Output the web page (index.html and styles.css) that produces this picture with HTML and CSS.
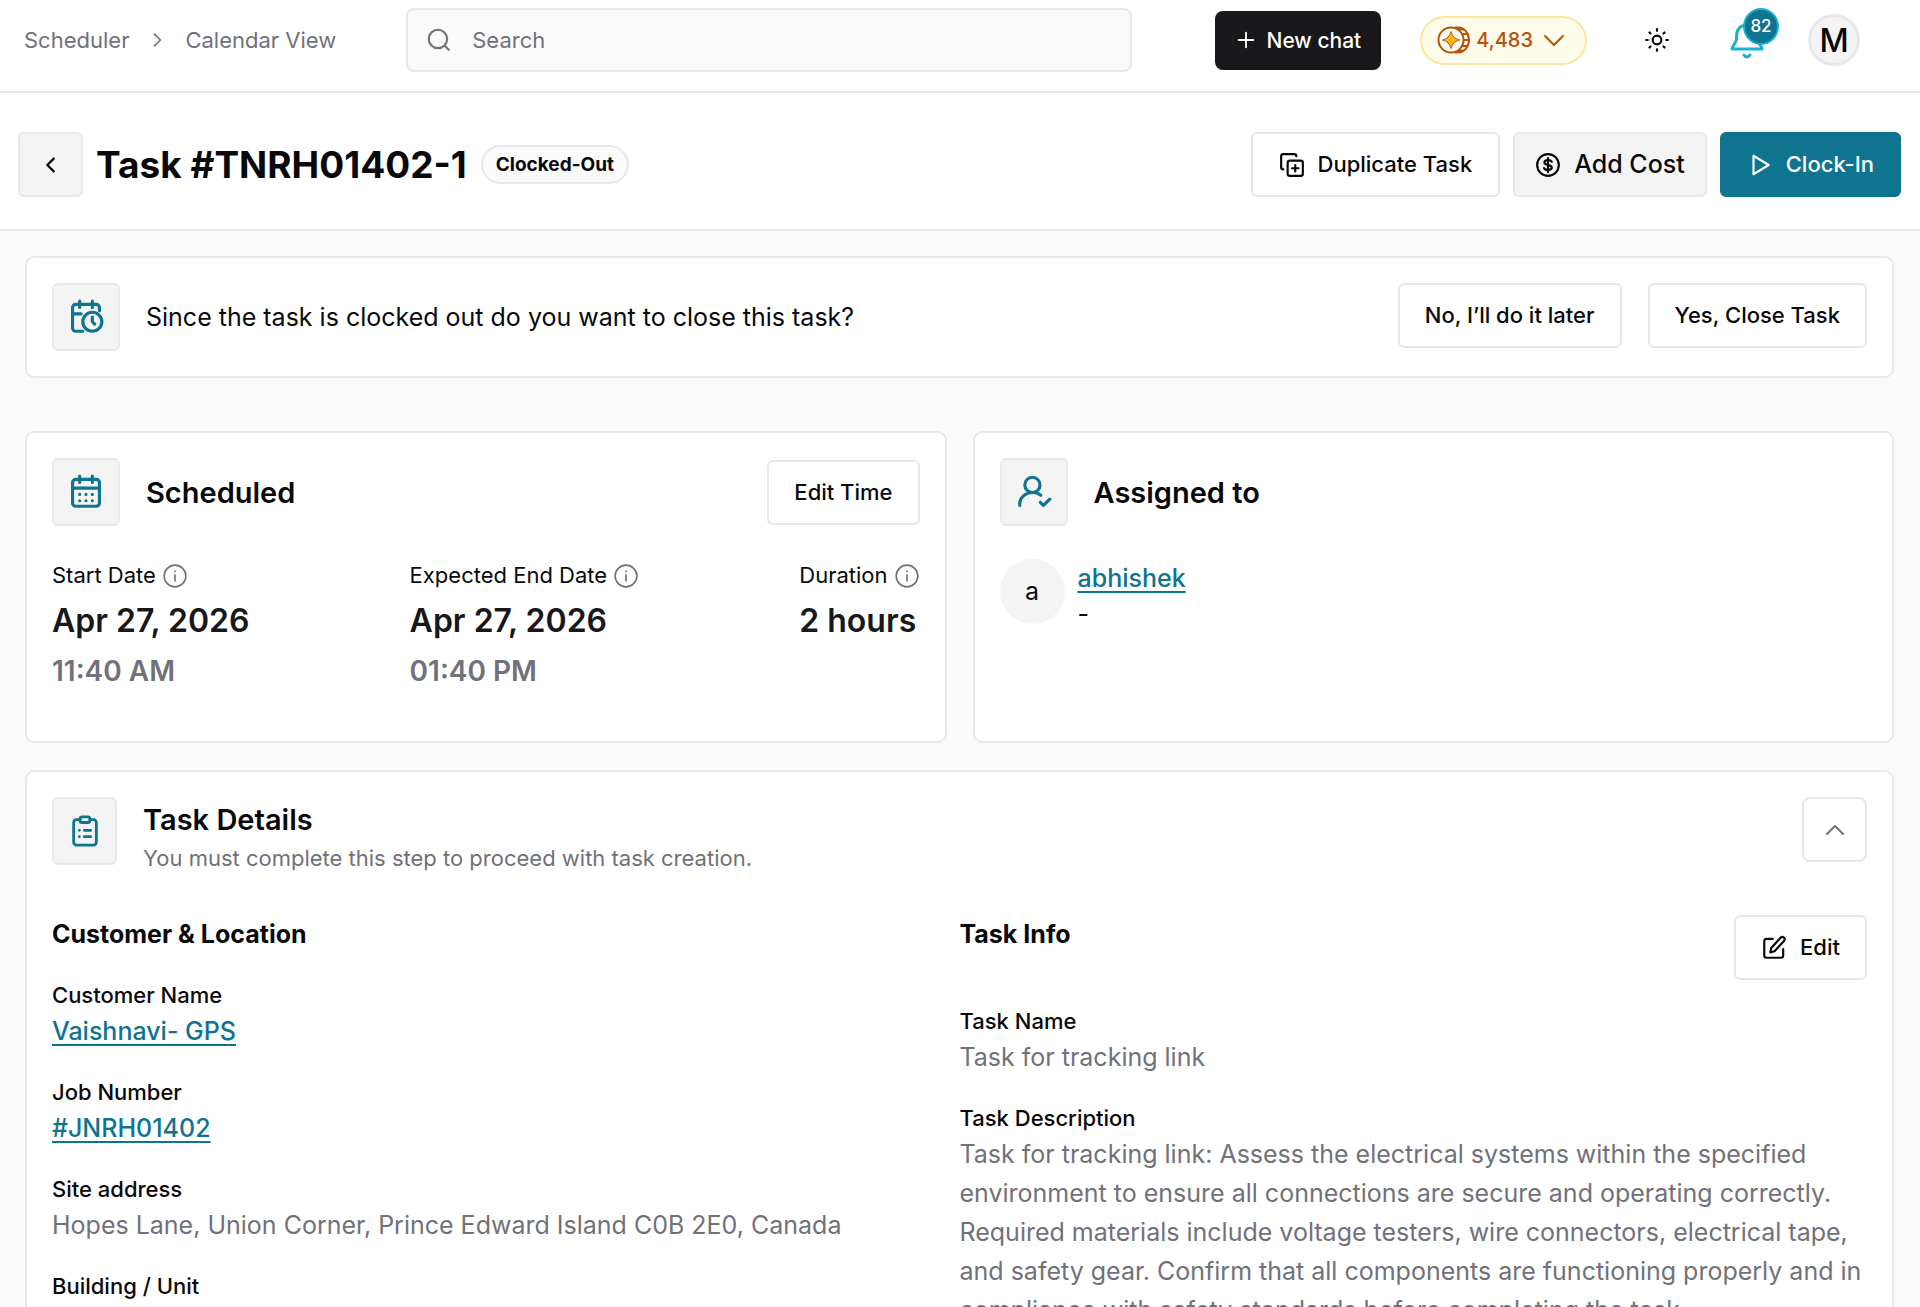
FILE: index.html
```html
<!DOCTYPE html>
<html lang="en">
<head>
  <meta charset="UTF-8">
  <meta name="viewport" content="width=device-width, initial-scale=1.0">
  <title>Task #TNRH01402-1</title>
  <link rel="stylesheet" href="styles.css">
</head>
<body>
  <header class="topbar">
    <nav class="breadcrumb" aria-label="Breadcrumb">
      <a href="#">Scheduler</a>
      <svg class="icon" width="20" height="20" viewBox="0 0 24 24"><path d="M9 5l7 7-7 7"/></svg>
      <a href="#">Calendar View</a>
    </nav>
    <label class="search">
      <svg class="icon" width="26" height="26" viewBox="0 0 24 24"><circle cx="11" cy="11" r="8.5"/><path d="M17.5 17.5L21 21"/></svg>
      <input type="search" placeholder="Search" aria-label="Search">
    </label>
    <div class="topbar-actions">
      <button class="btn-chat">
        <svg class="icon" width="22" height="22" viewBox="0 0 24 24"><path d="M12 4v16M4 12h16"/></svg>
        New chat
      </button>
      <button class="credits">
        <svg width="34" height="28" viewBox="0 0 34 28" fill="none" stroke="currentColor" stroke-width="2">
          <path d="M18 1.5h3c6 0 11 5.500 11 12.500s-5 12.500-11 12.500h-3M21 3.500h6M25 8h5.500M27 14h5M25 20h5.500M21 24.500h6"/>
          <ellipse cx="14" cy="14" rx="12.500" ry="12.500" fill="#fffef5"/>
          <path class="coin-star" d="M14 5.500c1.500 5 3.500 7 8.500 8.500-5 1.500-7 3.500-8.500 8.500-1.500-5-3.500-7-8.500-8.500 5-1.500 7-3.500 8.500-8.500z"/>
        </svg>
        4,483
        <svg class="chevron" width="22" height="22" viewBox="0 0 22 22" fill="none" stroke="currentColor" stroke-width="2" stroke-linecap="round" stroke-linejoin="round"><path d="M2 7l9 9 9-9"/></svg>
      </button>
      <button class="icon-btn" aria-label="Toggle theme">
        <svg class="icon" width="26" height="26" viewBox="0 0 24 24"><circle cx="12" cy="12" r="4"/><path d="M12 2v1.500M12 20.500v1.500M2 12h1.500M20.500 12h1.500M5 5l1 1M18 18l1 1M5 19l1-1M18 6l1-1"/></svg>
      </button>
      <button class="icon-btn bell" aria-label="Notifications">
        <svg class="icon" width="34" height="38" viewBox="0 0 34 38"><path d="M17 4C10 4 6.500 9 6.500 15v3c0 4-4.500 7-4.500 10h30c0-3-4.500-6-4.500-10v-3C27.500 9 24 4 17 4z"/><path d="M14 34c1.500 2.500 4.500 2.500 6 0" stroke-width="3"/></svg>
        <span class="bell-count">82</span>
      </button>
      <button class="user">M</button>
    </div>
  </header>

  <section class="titlebar">
    <button class="back" aria-label="Back">
      <svg class="icon" width="22" height="22" viewBox="0 0 24 24"><path d="M15 5l-7 7 7 7"/></svg>
    </button>
    <h1>Task #TNRH01402-1</h1>
    <span class="status">Clocked-Out</span>
    <div class="title-actions">
      <button class="btn">
        <svg class="icon" width="26" height="26" viewBox="0 0 24 24"><rect x="8" y="8" width="14" height="14" rx="2"/><path d="M15 12v6M12 15h6M4 16c-1.100 0-2-.9-2-2V4c0-1.100.9-2 2-2h10c1.100 0 2 .9 2 2"/></svg>
        Duplicate Task
      </button>
      <button class="btn btn-muted">
        <svg class="icon" width="26" height="26" viewBox="0 0 24 24"><circle cx="12" cy="12" r="10"/><path d="M15.500 9c-.5-1-1.700-1.500-3.500-1.500-2 0-3.300.8-3.300 2.200 0 3.200 6.800 1.400 6.800 4.600 0 1.400-1.500 2.200-3.500 2.200-1.800 0-3.200-.6-3.600-1.700M12 5.500v13"/></svg>
        Add Cost
      </button>
      <button class="btn btn-primary">
        <svg class="icon" width="26" height="26" viewBox="0 0 24 24"><path d="M6 3.500l14 8.500-14 8.500z"/></svg>
        Clock-In
      </button>
    </div>
  </section>

  <main class="content">
    <section class="card banner">
      <span class="tile">
        <svg class="icon" width="38" height="38" viewBox="0 0 24 24"><path d="M20.500 8V6a2 2 0 0 0-2-2h-13a2 2 0 0 0-2 2v13a2 2 0 0 0 2 2H10M8 2v4M16 2v4M3.500 10H9M16 12v3l1.500 1.500"/><circle cx="16" cy="15" r="6"/></svg>
      </span>
      <p>Since the task is clocked out do you want to close this task?</p>
      <div class="banner-actions">
        <button class="btn">No, I’ll do it later</button>
        <button class="btn">Yes, Close Task</button>
      </div>
    </section>

    <div class="columns">
      <section class="card">
        <div class="card-head">
          <span class="tile">
            <svg class="icon" width="38" height="38" viewBox="0 0 24 24"><rect x="3.500" y="4" width="17" height="17" rx="2"/><path d="M8 2v4M16 2v4M3.500 9.500h17M8 13.500h.01M12 13.500h.01M16 13.500h.01M8 17.500h.01M12 17.500h.01M16 17.500h.01"/></svg>
          </span>
          <h2>Scheduled</h2>
          <button class="btn">Edit Time</button>
        </div>
        <dl class="schedule">
          <div>
            <dt>Start Date <svg class="icon info" width="26" height="26" viewBox="0 0 24 24"><circle cx="12" cy="12" r="10"/><path d="M12 11v5.500M12 7.500v.5"/></svg></dt>
            <dd class="date">Apr 27, 2026</dd>
            <dd class="time">11:40 AM</dd>
          </div>
          <div>
            <dt>Expected End Date <svg class="icon info" width="26" height="26" viewBox="0 0 24 24"><circle cx="12" cy="12" r="10"/><path d="M12 11v5.500M12 7.500v.5"/></svg></dt>
            <dd class="date">Apr 27, 2026</dd>
            <dd class="time">01:40 PM</dd>
          </div>
          <div>
            <dt>Duration <svg class="icon info" width="26" height="26" viewBox="0 0 24 24"><circle cx="12" cy="12" r="10"/><path d="M12 11v5.500M12 7.500v.5"/></svg></dt>
            <dd class="date">2 hours</dd>
          </div>
        </dl>
      </section>

      <section class="card">
        <div class="card-head">
          <span class="tile">
            <svg class="icon" width="38" height="38" viewBox="0 0 24 24"><circle cx="11" cy="7.500" r="4.800"/><path d="M3 20.500v-.8c0-4.200 3.500-7.400 8-7.400 2 0 3.800.5 5.300 1.700M16 18.500l2 2 4-4"/></svg>
          </span>
          <h2>Assigned to</h2>
        </div>
        <div class="assignee">
          <span class="avatar">a</span>
          <div>
            <a class="link" href="#">abhishek</a>
            <p>-</p>
          </div>
        </div>
      </section>
    </div>

    <section class="card details">
      <div class="details-head">
        <span class="tile tile-small">
          <svg class="icon" width="34" height="34" viewBox="0 0 24 24"><path d="M8.500 4H6a2 2 0 0 0-2 2v14a2 2 0 0 0 2 2h12a2 2 0 0 0 2-2V6a2 2 0 0 0-2-2h-2.500"/><rect x="8.500" y="2" width="7" height="4" rx="1.500"/><path d="M8 11.500h.01M8 16h.01M11.500 11.500H16M11.500 16H16"/></svg>
        </span>
        <div class="details-title">
          <h2>Task Details</h2>
          <p>You must complete this step to proceed with task creation.</p>
        </div>
        <button class="collapse" aria-label="Collapse">
          <svg class="icon" width="24" height="24" viewBox="0 0 24 24"><path d="M4 16l8-8 8 8"/></svg>
        </button>
      </div>
      <div class="details-body">
        <div>
          <div class="sub-head">
            <h3>Customer &amp; Location</h3>
          </div>
          <dl class="fields">
            <dt>Customer Name</dt>
            <dd><a class="link" href="#">Vaishnavi- GPS</a></dd>
            <dt>Job Number</dt>
            <dd><a class="link" href="#">#JNRH01402</a></dd>
            <dt>Site address</dt>
            <dd>Hopes Lane, Union Corner, Prince Edward Island C0B 2E0, Canada</dd>
            <dt>Building / Unit</dt>
            <dd>-</dd>
          </dl>
        </div>
        <div>
          <div class="sub-head">
            <h3>Task Info</h3>
            <button class="btn">
              <svg class="icon" width="26" height="26" viewBox="0 0 24 24"><path d="M11 3.500H5a2 2 0 0 0-2 2V19a2 2 0 0 0 2 2h13.500a2 2 0 0 0 2-2v-6"/><path d="M18 2.500a2.100 2.100 0 0 1 3.200 3L12.500 15l-4 1 1-4z"/></svg>
              Edit
            </button>
          </div>
          <dl class="fields">
            <dt>Task Name</dt>
            <dd>Task for tracking link</dd>
            <dt>Task Description</dt>
            <dd>Task for tracking link: Assess the electrical systems within the specified environment to ensure all connections are secure and operating correctly. Required materials include voltage testers, wire connectors, electrical tape, and safety gear. Confirm that all components are functioning properly and in compliance with safety standards before completing the task.</dd>
          </dl>
        </div>
      </div>
    </section>
  </main>
</body>
</html>
```
FILE: styles.css
```css
* {
  box-sizing: border-box;
  margin: 0;
  padding: 0;
}
body {
  height: 100vh;
  display: flex;
  flex-direction: column;
  overflow: hidden;
  background: #fafafa;
  color: #09090b;
  font-family: Inter, "Liberation Sans", sans-serif;
  font-size: 25px;
  line-height: 39px;
}
button, input {
  font: inherit;
  color: inherit;
}
button {
  cursor: pointer;
  display: flex;
  align-items: center;
  justify-content: center;
  white-space: nowrap;
}
.icon {
  flex: none;
  fill: none;
  stroke: currentColor;
  stroke-width: 2;
  stroke-linecap: round;
  stroke-linejoin: round;
}

/* top bar */
.topbar {
  flex: none;
  display: flex;
  align-items: center;
  padding: 8px 60px 19px 24px;
  background: #fff;
  border-bottom: 2px solid #e8e8ea;
}
.breadcrumb {
  display: flex;
  align-items: center;
  gap: 18px;
  margin-right: 70px;
  font-size: 22px;
  color: #71717a;
}
.breadcrumb a {
  color: inherit;
  text-decoration: none;
  white-space: nowrap;
}
.search {
  flex: 1;
  height: 64px;
  display: flex;
  align-items: center;
  gap: 20px;
  padding: 0 18px;
  background: #fafafa;
  border: 2px solid #e8e8ea;
  border-radius: 8px;
  color: #71717a;
}
.search input {
  flex: 1;
  min-width: 0;
  border: none;
  outline: none;
  background: none;
  font-size: 22px;
}
.search input::placeholder {
  color: #71717a;
}
.topbar-actions {
  display: flex;
  align-items: center;
  margin-left: 83px;
}
.btn-chat {
  height: 59px;
  gap: 10px;
  padding: 0 20px;
  border: none;
  border-radius: 8px;
  background: #18181b;
  color: #fff;
  font-size: 21px;
  font-weight: 500;
}
.credits {
  height: 49px;
  gap: 5px;
  margin: 0 57px 0 39px;
  padding: 0 20px 0 15px;
  border: 2px solid #fae69e;
  border-radius: 25px;
  background: #fffcec;
  color: #b45309;
  font-size: 20px;
  font-weight: 500;
}
.coin-star {
  fill: #fbb514;
  stroke-width: 1;
}
.chevron {
  margin-left: 5px;
}
.icon-btn {
  border: none;
  background: none;
}
.bell {
  position: relative;
  margin: 0 44px 0 60px;
  color: #17b3ce;
}
.bell .icon {
  stroke-width: 3;
}
.bell-count {
  position: absolute;
  top: -13px;
  right: -15px;
  width: 36px;
  height: 37px;
  border: 2px solid #17b3ce;
  border-radius: 50%;
  background: #0e7490;
  color: #fff;
  font-size: 17px;
  font-weight: 500;
  line-height: 33px;
}
.user {
  width: 52px;
  height: 52px;
  border: 3px solid #e8e8ea;
  border-radius: 50%;
  background: #f4f4f5;
  font-size: 32px;
  font-weight: 500;
}

/* title bar */
.titlebar {
  flex: none;
  display: flex;
  align-items: center;
  padding: 39px 19px 32px 18px;
  background: #fff;
  border-bottom: 2px solid #e8e8ea;
}
.back {
  width: 65px;
  height: 65px;
  margin-right: 13px;
  border: 2px solid #e8e8ea;
  border-radius: 6px;
  background: #f4f4f5;
}
.back .icon {
  stroke-width: 2.5;
}
h1 {
  font-size: 37px;
  font-weight: 700;
  white-space: nowrap;
}
.status {
  margin-left: 14px;
  padding: 0 13px;
  border: 2px solid #e8e8ea;
  border-radius: 20px;
  background: #fafafa;
  font-size: 19px;
  line-height: 35px;
  font-weight: 700;
}
.title-actions {
  display: flex;
  gap: 13px;
  margin-left: auto;
}
.btn {
  height: 65px;
  gap: 13px;
  padding: 0 25px;
  border: 2px solid #e8e8ea;
  border-radius: 6px;
  background: #fff;
  font-size: 22px;
  font-weight: 500;
}
.title-actions .btn {
  padding: 0 26px;
}
.title-actions .btn-muted {
  padding: 0 20px;
  background: #f4f4f5;
  font-size: 25px;
}
.title-actions .btn-primary {
  padding: 0 25px;
  border-color: #0e7490;
  background: #0e7490;
  color: #fff;
}

/* cards */
.content {
  flex: 1;
  min-height: 0;
  padding: 25px 26px 0 25px;
  overflow: hidden;
}
.card {
  padding: 25px;
  background: #fff;
  border: 2px solid #e8e8ea;
  border-radius: 9px;
}
.tile {
  flex: none;
  display: flex;
  align-items: center;
  justify-content: center;
  width: 68px;
  height: 68px;
  border: 2px solid #e8e8ea;
  border-radius: 6px;
  background: #f4f4f5;
  color: #0e7490;
}
.tile-small {
  width: 65px;
}
.banner {
  display: flex;
  align-items: flex-start;
  margin-bottom: 53px;
}
.banner p {
  margin-left: 26px;
  line-height: 68px;
}
.banner-actions {
  display: flex;
  gap: 26px;
  margin-left: auto;
}
.columns {
  display: grid;
  grid-template-columns: 1fr 1fr;
  gap: 26px;
  margin-bottom: 27px;
}
.columns .card {
  min-height: 312px;
}
.card-head {
  display: flex;
  align-items: center;
  gap: 26px;
}
.card-head .btn {
  margin-left: auto;
}
h2 {
  font-size: 29px;
  font-weight: 600;
}
h3 {
  font-size: 25px;
  font-weight: 700;
}
.schedule {
  display: flex;
  justify-content: space-between;
  margin-top: 30px;
}
.schedule dt {
  display: flex;
  align-items: center;
  gap: 6px;
  font-size: 22px;
}
.info {
  color: #71717a;
  stroke-width: 1.5;
}
.date {
  margin-top: 6px;
  color: #18181b;
  font-size: 32px;
  font-weight: 600;
}
.time {
  margin-top: 12px;
  color: #71717a;
  font-size: 28px;
  font-weight: 600;
}
.link {
  color: #0e7490;
  font-weight: 500;
  text-decoration-thickness: 2px;
  text-underline-offset: 4px;
}
.assignee {
  display: flex;
  gap: 13px;
  margin-top: 33px;
}
.assignee p {
  line-height: 33px;
}
.avatar {
  width: 65px;
  height: 65px;
  border-radius: 50%;
  background: #f4f4f5;
  text-align: center;
  line-height: 65px;
}

/* task details */
.details-head {
  display: flex;
  align-items: flex-start;
  gap: 26px;
}
.details-title {
  padding-top: 3px;
}
.details-head p {
  color: #71717a;
  font-size: 22px;
}
.collapse {
  width: 65px;
  height: 65px;
  margin-left: auto;
  border: 2px solid #e8e8ea;
  border-radius: 8px;
  background: #fff;
  color: #71717a;
}
.details-body {
  display: grid;
  grid-template-columns: 1fr 1fr;
  margin-top: 37px;
}
.sub-head {
  display: flex;
  justify-content: space-between;
  align-items: flex-start;
}
.fields dt {
  margin-top: 25px;
  font-size: 22px;
  font-weight: 500;
  line-height: 33px;
}
.fields dd {
  color: #71717a;
}
```
